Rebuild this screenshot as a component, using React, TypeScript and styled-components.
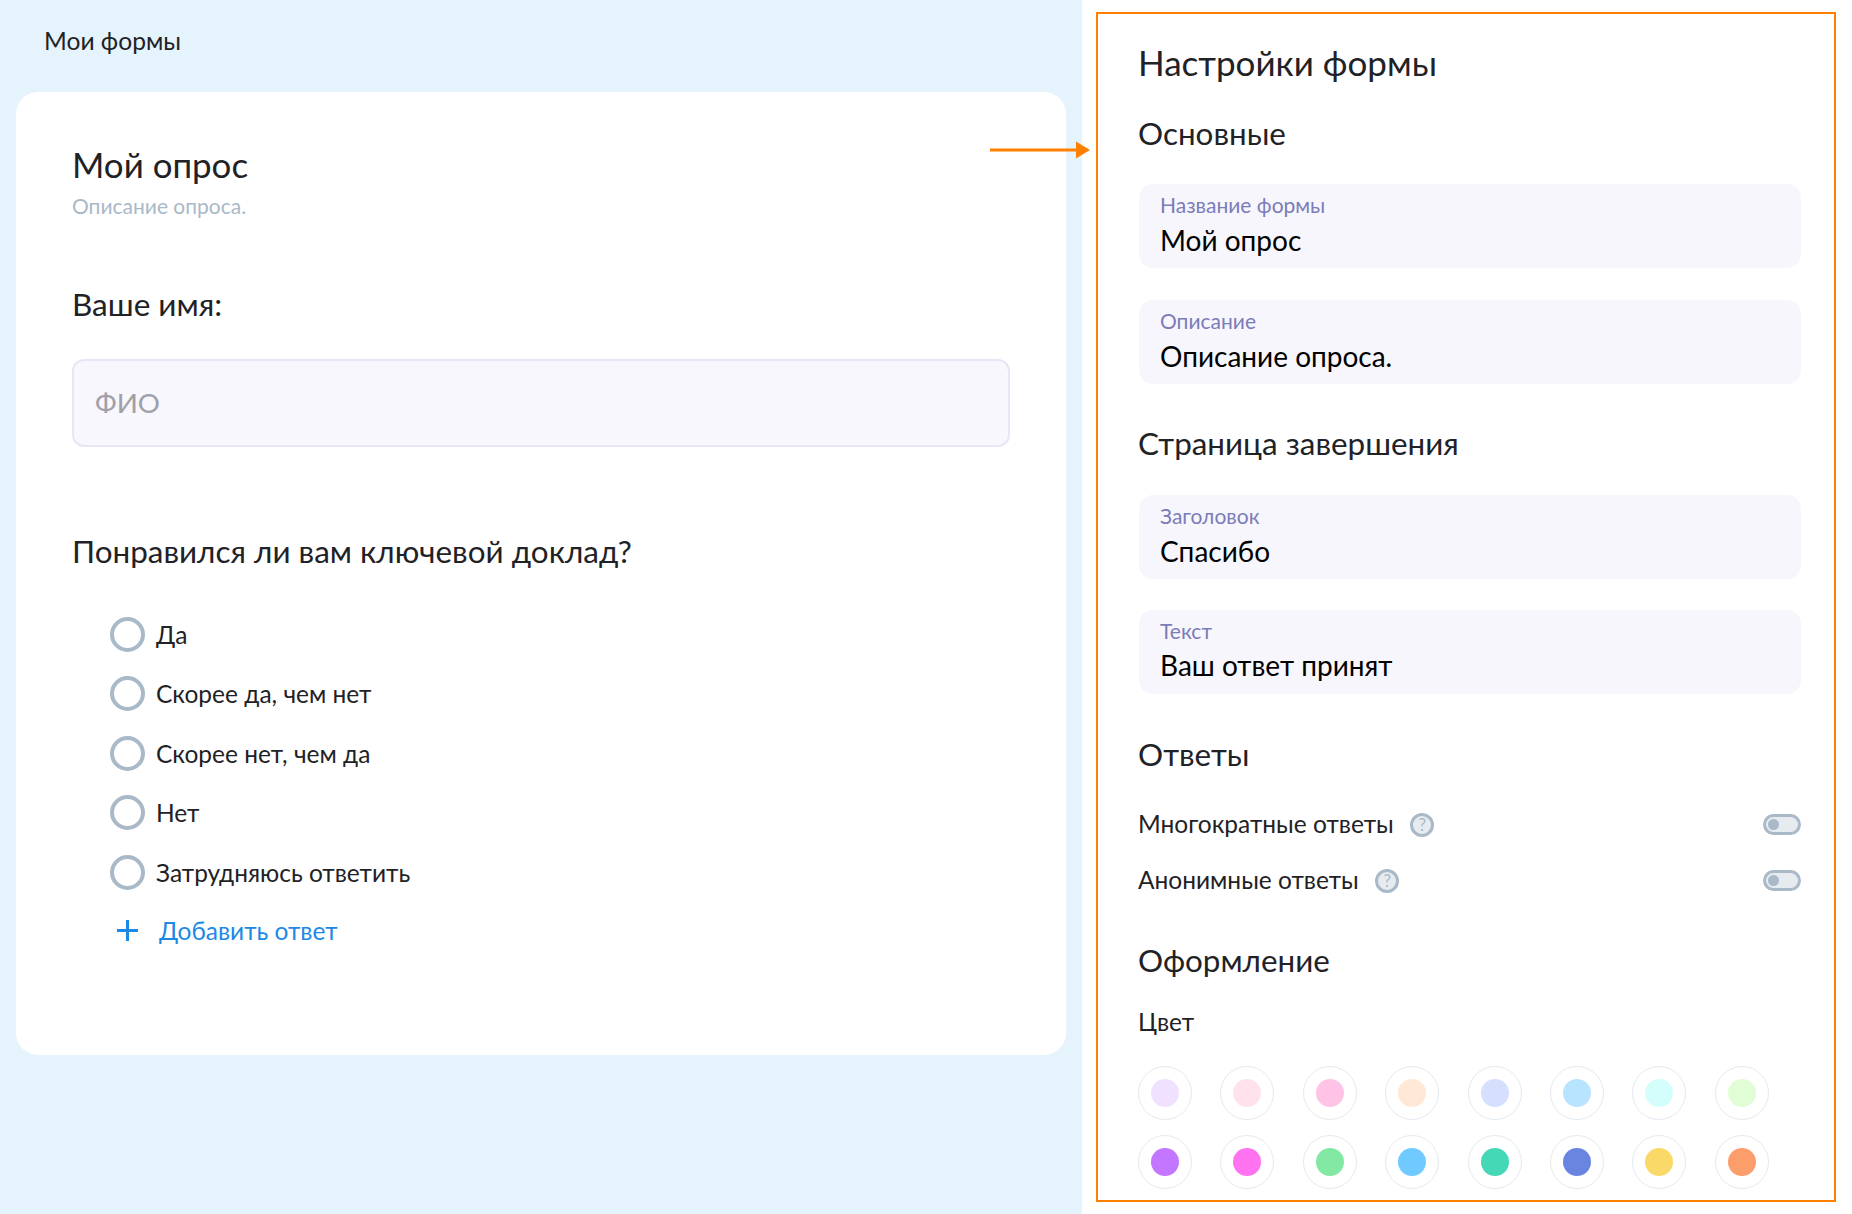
import React from 'react'
import styled, { createGlobalStyle } from 'styled-components'

const GlobalStyle = createGlobalStyle`
  html, body {
    margin: 0;
    padding: 0;
    background: #fff;
  }
  body {
    font-family: 'Lato', 'Noto Sans', sans-serif;
    color: #1f2226;
  }
`

const Page = styled.div`
  position: relative;
  display: flex;
  width: 1852px;
  height: 1214px;
  overflow: hidden;
`

const LeftPane = styled.div`
  width: 1082px;
  flex-shrink: 0;
  background: #e5f3fd;
  padding-top: 23px;
  box-sizing: border-box;
`

const Crumb = styled.div`
  margin-left: 44px;
  font-size: 24.6px;
  line-height: 36px;
`

const Card = styled.div`
  margin: 33px 0 0 16px;
  width: 1050px;
  height: 963px;
  box-sizing: border-box;
  padding: 51px 56px 0;
  background: #fff;
  border-radius: 22px;
`

const FormTitle = styled.div`
  font-size: 34.9px;
  line-height: 44px;
`

const FormDesc = styled.div`
  margin-top: 5px;
  font-size: 21px;
  line-height: 28px;
  color: #a9b9c8;
`

const FieldName = styled.div`
  margin-top: 66px;
  font-size: 31.5px;
  line-height: 36px;
`

const NameInput = styled.div`
  margin-top: 37px;
  width: 938px;
  height: 88px;
  box-sizing: border-box;
  display: flex;
  align-items: center;
  padding: 0 0 2px 21px;
  background: #f7f7fd;
  border: 2px solid #e7e6f7;
  border-radius: 12px;
  font-size: 27.7px;
  color: #a0a0a8;
`

const Question = styled.div`
  margin-top: 84px;
  font-size: 31.45px;
  line-height: 40px;
`

const Options = styled.div`
  margin-top: 33.5px;
  padding-left: 38px;
`

const OptionRow = styled.div`
  display: flex;
  align-items: center;
  height: 59.5px;
  font-size: 24.5px;
`

const Radio = styled.span`
  width: 35px;
  height: 35px;
  box-sizing: border-box;
  border: 4px solid #a9b9c8;
  border-radius: 50%;
  margin-right: 11px;
`

const AddRow = styled(OptionRow)`
  margin-top: -1px;
  color: #1e88e5;
`

const PlusBox = styled.span`
  width: 35px;
  display: flex;
  justify-content: center;
  margin-right: 14px;
`

const RightPane = styled.div`
  flex: 1;
  padding: 12px 16px 12px 14px;
`

const SettingsBox = styled.div`
  height: 1190px;
  box-sizing: border-box;
  border: 2px solid #ff8000;
  padding: 28px 33px 0 40px;
`

const SettingsTitle = styled.div`
  font-size: 35px;
  line-height: 40px;
`

const SectionTitle = styled.div<{ $top: number }>`
  margin-top: ${({ $top }) => $top}px;
  font-size: 31.4px;
  line-height: 36px;
`

const Field = styled.div<{ $top: number }>`
  margin: ${({ $top }) => $top}px 0 0 1px;
  height: 84px;
  box-sizing: border-box;
  padding: 8px 21px 0;
  background: #f7f6fc;
  border-radius: 14px;
`

const FieldLabel = styled.div`
  font-size: 21px;
  line-height: 26px;
  color: #7b7cb8;
`

const FieldValue = styled.div`
  margin-top: 4.5px;
  font-size: 28px;
  line-height: 34px;
  color: #000;
`

const ToggleRow = styled.div<{ $top: number }>`
  margin-top: ${({ $top }) => $top}px;
  display: flex;
  align-items: center;
  height: 32px;
  font-size: 24.5px;
`

const RowLabel = styled.span`
  margin-bottom: 2px;
`

const HelpIcon = styled.span`
  width: 24px;
  height: 24px;
  box-sizing: border-box;
  margin-left: 16.5px;
  border: 3px solid #a9b9c8;
  border-radius: 50%;
  background: #e6ebef;
  display: flex;
  align-items: center;
  justify-content: center;
  font-size: 17px;
  color: #a9b9c8;
`

const Toggle = styled.span`
  margin-left: auto;
  width: 38px;
  height: 21px;
  box-sizing: border-box;
  border: 3px solid #a9b9c8;
  border-radius: 11px;
  background: #e6ebef;
  display: flex;
  align-items: center;
  padding-left: 2px;

  &::before {
    content: '';
    width: 11px;
    height: 11px;
    border-radius: 50%;
    background: #a9b9c8;
  }
`

const ColorLabel = styled.div`
  margin-top: 29px;
  font-size: 24.5px;
  line-height: 30px;
`

const Swatches = styled.div`
  margin-top: 29px;
  display: grid;
  grid-template-columns: repeat(8, 54px);
  column-gap: 28.4px;
  row-gap: 15px;
`

const Swatch = styled.span<{ $color: string }>`
  width: 54px;
  height: 54px;
  box-sizing: border-box;
  border: 1px solid #e3eaf1;
  border-radius: 50%;
  display: flex;
  align-items: center;
  justify-content: center;

  &::before {
    content: '';
    width: 28px;
    height: 28px;
    border-radius: 50%;
    background: ${({ $color }) => $color};
  }
`

const Arrow = styled.svg`
  position: absolute;
  left: 990px;
  top: 141px;
`

const answers = ['Да', 'Скорее да, чем нет', 'Скорее нет, чем да', 'Нет', 'Затрудняюсь ответить']

const colors = [
  '#f0e2fe', '#ffe2ec', '#ffc3e6', '#ffe8d6', '#d5e0fe', '#b8e4ff', '#d3fefc', '#e0fdd6',
  '#c376ff', '#ff73f0', '#84e8a5', '#70caff', '#45d8b6', '#6a85e0', '#fbd968', '#fc9e6b',
]

const App = () => {
  return (
    <Page>
      <GlobalStyle />
      <LeftPane>
        <Crumb>Мои формы</Crumb>
        <Card>
          <FormTitle>Мой опрос</FormTitle>
          <FormDesc>Описание опроса.</FormDesc>
          <FieldName>Ваше имя:</FieldName>
          <NameInput>ФИО</NameInput>
          <Question>Понравился ли вам ключевой доклад?</Question>
          <Options>
            {answers.map((answer) => (
              <OptionRow key={answer}>
                <Radio />
                {answer}
              </OptionRow>
            ))}
            <AddRow>
              <PlusBox>
                <svg width="21" height="21" viewBox="0 0 21 21">
                  <path d="M10.5 0v21M0 10.5h21" stroke="#1e88e5" strokeWidth="3" fill="none" />
                </svg>
              </PlusBox>
              Добавить ответ
            </AddRow>
          </Options>
        </Card>
      </LeftPane>
      <RightPane>
        <SettingsBox>
          <SettingsTitle>Настройки формы</SettingsTitle>
          <SectionTitle $top={33}>Основные</SectionTitle>
          <Field $top={33}>
            <FieldLabel>Название формы</FieldLabel>
            <FieldValue>Мой опрос</FieldValue>
          </Field>
          <Field $top={32}>
            <FieldLabel>Описание</FieldLabel>
            <FieldValue>Описание опроса.</FieldValue>
          </Field>
          <SectionTitle $top={41}>Страница завершения</SectionTitle>
          <Field $top={34}>
            <FieldLabel>Заголовок</FieldLabel>
            <FieldValue>Спасибо</FieldValue>
          </Field>
          <Field $top={30.5}>
            <FieldLabel>Текст</FieldLabel>
            <FieldValue>Ваш ответ принят</FieldValue>
          </Field>
          <SectionTitle $top={42.5}>Ответы</SectionTitle>
          <ToggleRow $top={36.5}>
            <RowLabel>Многократные ответы</RowLabel>
            <HelpIcon>?</HelpIcon>
            <Toggle />
          </ToggleRow>
          <ToggleRow $top={24}>
            <RowLabel>Анонимные ответы</RowLabel>
            <HelpIcon>?</HelpIcon>
            <Toggle />
          </ToggleRow>
          <SectionTitle $top={45}>Оформление</SectionTitle>
          <ColorLabel>Цвет</ColorLabel>
          <Swatches>
            {colors.map((color) => (
              <Swatch key={color} $color={color} />
            ))}
          </Swatches>
        </SettingsBox>
      </RightPane>
      <Arrow width="100" height="18" viewBox="0 0 100 18">
        <path d="M0 9h87" stroke="#ff8000" strokeWidth="3" fill="none" />
        <path d="M86 0.5L100 9L86 17.5z" fill="#ff8000" />
      </Arrow>
    </Page>
  )
}

export default App
